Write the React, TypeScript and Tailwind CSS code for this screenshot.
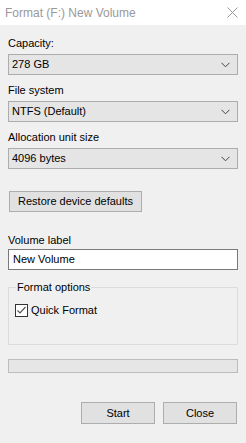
import React from 'react';

function Combo({ value }: { value: string }) {
  return (
    <div className="mt-[3px] flex h-[21px] items-center justify-between border border-[#adadad] bg-[#e5e5e5] pl-[3px] pr-[6px]">
      <span className="text-black">{value}</span>
      <svg width="9" height="6" viewBox="0 0 9 6" className="mr-px">
        <path d="M0.5 0.8 L4.5 4.8 L8.5 0.8" fill="none" stroke="#444" strokeWidth="1" />
      </svg>
    </div>
  );
}

function Label({ text, className = '' }: { text: string; className?: string }) {
  return <div className={`h-[15px] leading-[15px] text-black ${className}`}>{text}</div>;
}

export default function App() {
  return (
    <div className="flex h-[443px] w-[246px] flex-col overflow-hidden bg-[#f0f0f0] font-['Segoe_UI','Liberation_Sans',Arial,sans-serif] text-[11px]">
      <div className="flex h-[25px] shrink-0 items-center justify-between bg-white pl-[5px] pr-[8px]">
        <span className="text-[12px] text-[#999]">Format (F:) New Volume</span>
        <svg width="11" height="11" viewBox="0 0 11 11">
          <path d="M0.5 0.5 L10.5 10.5 M10.5 0.5 L0.5 10.5" stroke="#999" strokeWidth="1" />
        </svg>
      </div>

      <div className="flex flex-col px-[8px]">
        <Label text="Capacity:" className="mt-[11px]" />
        <Combo value="278 GB" />

        <Label text="File system" className="mt-[8px]" />
        <Combo value="NTFS (Default)" />

        <Label text="Allocation unit size" className="mt-[8px]" />
        <Combo value="4096 bytes" />

        <button className="ml-px mt-[22px] h-[21px] w-[133px] border border-[#adadad] bg-[#e1e1e1] text-center text-black">
          Restore device defaults
        </button>

        <Label text="Volume label" className="mt-[21px]" />
        <div className="mt-px flex h-[21px] items-center border border-[#7a7a7a] bg-white pl-[4px] text-black">
          New Volume
        </div>

        <fieldset className="mt-[10px] border border-[#dcdcdc] px-[6px] pb-[27px]">
          <legend className="ml-[1px] px-[1px] leading-[15px] text-black">Format options</legend>
          <label className="mt-[9px] flex h-[13px] items-center gap-[3px] text-black">
            <span className="flex h-[13px] w-[13px] items-center justify-center border border-[#333] bg-white">
              <svg width="11" height="11" viewBox="0 0 11 11">
                <path d="M1.5 5.5 L4 8 L9.5 2" fill="none" stroke="#555" strokeWidth="1.2" />
              </svg>
            </span>
            <span className="leading-[13px]">Quick Format</span>
          </label>
        </fieldset>

        <div className="mt-[14px] h-[14px] border border-[#bcbcbc] bg-[#e6e6e6]" />

        <div className="mr-px mt-[29px] flex justify-end gap-[8px]">
          <button className="h-[22px] w-[74px] border border-[#adadad] bg-[#e1e1e1] text-black">Start</button>
          <button className="h-[22px] w-[74px] border border-[#adadad] bg-[#e1e1e1] text-black">Close</button>
        </div>
      </div>
    </div>
  );
}
